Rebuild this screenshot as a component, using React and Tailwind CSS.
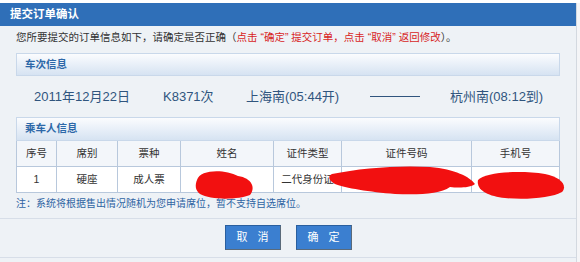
import React from "react";

const font = { fontFamily: '"Liberation Sans", "Noto Sans CJK SC", sans-serif' };

const cols = [
  { label: "序号", w: "w-[40px]", v: "1" },
  { label: "席别", w: "w-[61px]", v: "硬座" },
  { label: "票种", w: "w-[63px]", v: "成人票" },
  { label: "姓名", w: "w-[93px]", v: "" },
  { label: "证件类型", w: "w-[68px]", v: "二代身份证" },
  { label: "证件号码", w: "w-[130px]", v: "" },
  { label: "手机号", w: "flex-1", v: "" },
];

const SectionHead = ({ children, h }) => (
  <div className={`${h} flex items-center px-[8px] border border-[#c9d8ea] bg-gradient-to-b from-[#fbfcfe] to-[#d6e3f2] text-[10.5px] font-bold text-[#2d68a8]`}>
    {children}
  </div>
);

const Btn = ({ children }) => (
  <button className="w-[56px] h-[25px] bg-[#3b7fd0] border border-[#2a5f9e] border-r-[#5a6a7a] border-b-[#5a6a7a] text-white text-[11px] flex items-center justify-around px-[6px]">
    {children}
  </button>
);

export default function App() {
  return (
    <div className="w-[580px] h-[262px] bg-white relative overflow-hidden" style={font}>
      <div className="flex h-full pt-[3px]">
        <div className="w-[576px] bg-[#eef2f6] flex flex-col">
          <div className="h-[23px] shrink-0 bg-[#2f6fb8] text-white font-bold text-[11.5px] flex items-center px-[10px]">
            提交订单确认
          </div>
          <div className="h-[27px] shrink-0 text-[10.5px] text-[#333] pl-[16px] flex items-center pb-[3px]">
            <span>
              您所要提交的订单信息如下，请确定是否正确（
              <span className="text-[#d81e1e]">点击 “确定” 提交订单，点击 “取消” 返回修改</span>
              ）。
            </span>
          </div>
          <div className="pl-[16px] pr-[16px]">
            <SectionHead h="h-[23px]">车次信息</SectionHead>
            <div className="h-[41px] flex items-center text-[13px] text-[#30557e]">
              <span className="ml-[18px] w-[129px]">2011年12月22日</span>
              <span className="w-[83px]">K8371次</span>
              <span className="w-[124px]">上海南(05:44开)</span>
              <span className="w-[50px] h-px bg-[#30557e]"></span>
              <span className="ml-[30px]">杭州南(08:12到)</span>
            </div>
            <SectionHead h="h-[24px]">乘车人信息</SectionHead>
            <div className="border-l border-[#b8c8dc]">
              <div className="flex h-[26px] bg-[#f3f6fa] border-b border-[#b8c8dc]">
                {cols.map((c) => (
                  <div key={c.label} className={`${c.w} border-r border-[#b8c8dc] flex items-center justify-center text-[10.5px] text-[#333]`}>
                    {c.label}
                  </div>
                ))}
              </div>
              <div className="flex h-[26px] bg-white border-b border-[#b8c8dc]">
                {cols.map((c) => (
                  <div key={c.label} className={`${c.w} border-r border-[#b8c8dc] flex items-center justify-center text-[10.5px] text-[#333]`}>
                    {c.v}
                  </div>
                ))}
              </div>
            </div>
          </div>
          <div className="h-[25px] shrink-0 text-[10px] text-[#2f64a3] pl-[16px] flex items-center pb-[5px]">
            注：系统将根据售出情况随机为您申请席位，暂不支持自选席位。
          </div>
          <div className="border-t border-[#d7dee8] flex justify-center gap-[15px] pt-[6px] h-[39px] shrink-0">
            <Btn><span>取</span><span>消</span></Btn>
            <Btn><span>确</span><span>定</span></Btn>
          </div>
          <div className="border-t border-[#d7dee8] flex-1"></div>
        </div>
        <div className="flex-1 border-l border-[#d3d9e0] bg-[#f4f5f7]"></div>
      </div>
      <svg className="absolute left-0 top-0 pointer-events-none" width="580" height="262">
        <path d="M197 180 C200 169 225 169 238 176 C252 178 256 188 250 195 C238 200 210 200 200 194 C195 190 195 185 197 180 Z" fill="#f21010" />
        <path d="M332 174 C360 168 400 165 430 167 C455 169 470 177 475 184 C470 188 458 188 450 187 C440 194 420 195 395 194 C370 192 345 188 335 184 C328 180 328 176 332 174 Z" fill="#f21010" />
        <path d="M478 180 C485 172 520 170 545 174 C560 177 568 185 562 192 C552 198 525 200 505 198 C488 196 476 190 478 180 Z" fill="#f21010" />
      </svg>
    </div>
  );
}
